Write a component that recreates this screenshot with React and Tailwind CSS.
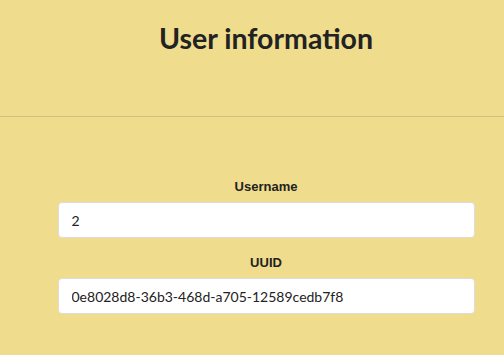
import React, { useState } from "react";

const Field = ({ label, value, onChange }) => (
  <div className="flex flex-col items-center w-full">
    <label className="mb-[7px] text-[13px] leading-[16px] font-bold text-[#222] font-['Liberation_Sans',Arial,sans-serif]">
      {label}
    </label>
    <input
      type="text"
      value={value}
      onChange={onChange}
      className="w-[417px] h-[36px] px-[13px] bg-white border border-[#dcdcdc] rounded-[4px] text-[14px] text-[#222] font-['Lato',sans-serif] outline-none"
    />
  </div>
);

const App = () => {
  const [user, setUser] = useState({
    username: "2",
    uuid: "0e8028d8-36b3-468d-a705-12589cedb7f8",
  });

  return (
    <div className="min-h-screen bg-[#efdc8c] font-['Lato',sans-serif]">
      <header className="border-b border-[#cfc07f] pt-[21px] pb-[61px] pl-[28px]">
        <h1 className="text-center text-[28.5px] leading-[34px] font-bold text-[#222]">User information</h1>
      </header>

      <form className="pl-[28px] pt-[62px] flex flex-col gap-[17px]">
        <Field
          label="Username"
          value={user.username}
          onChange={(e) => setUser({ ...user, username: e.target.value })}
        />
        <Field
          label="UUID"
          value={user.uuid}
          onChange={(e) => setUser({ ...user, uuid: e.target.value })}
        />
      </form>
    </div>
  );
};

export default App;
